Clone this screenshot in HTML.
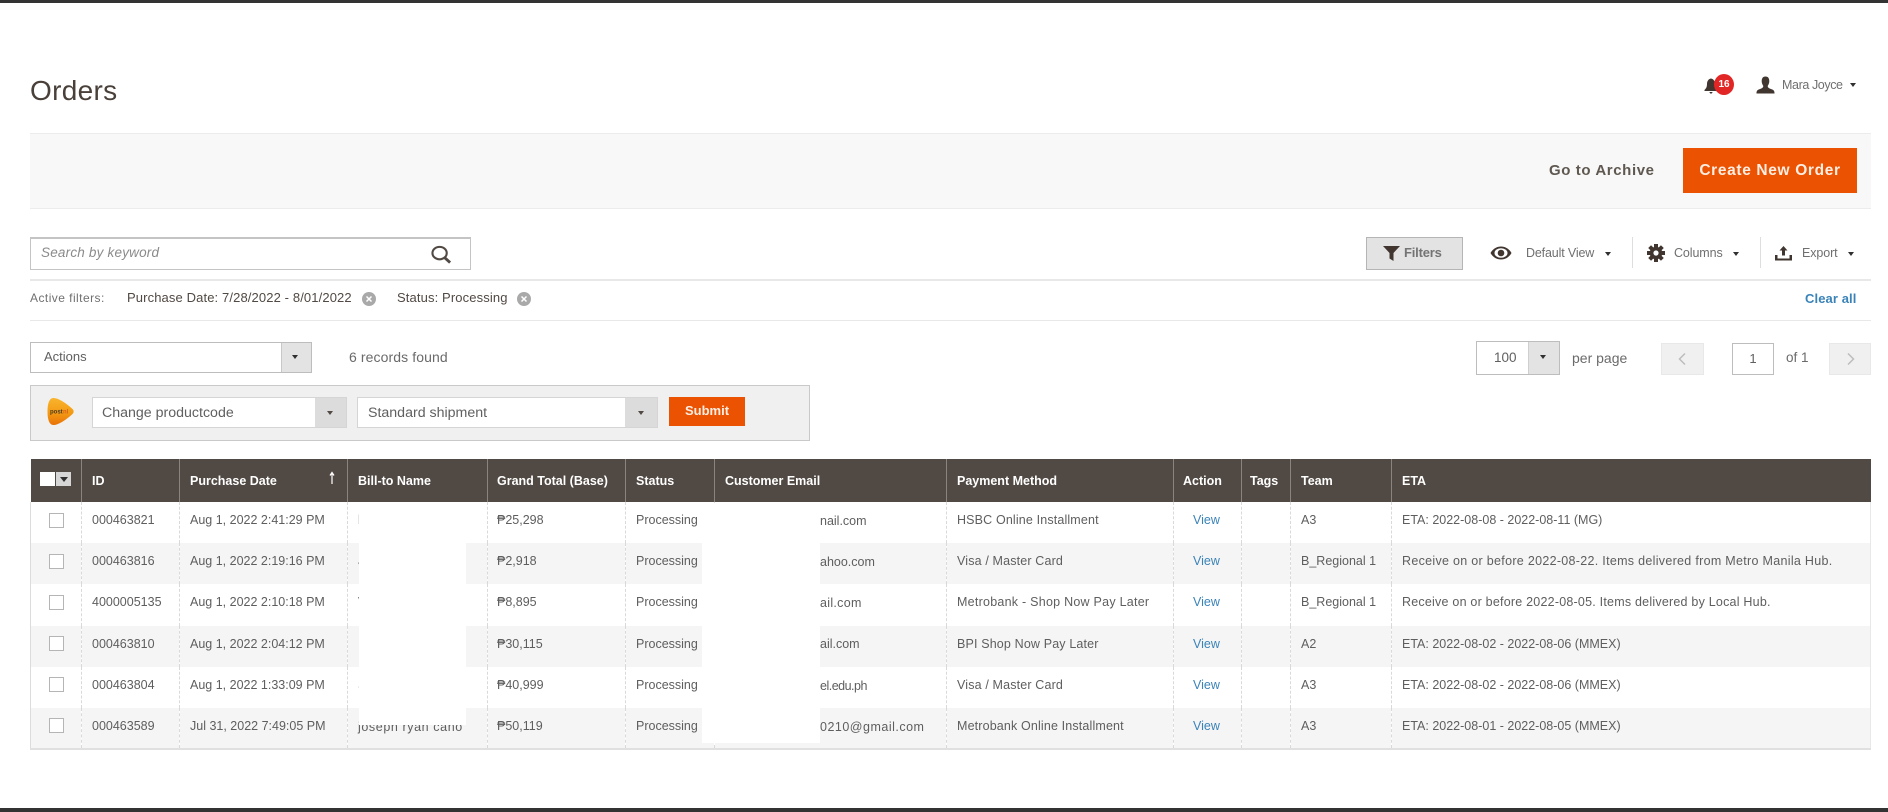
<!DOCTYPE html>
<html lang="en"><head><meta charset="utf-8"><title>Orders</title>
<style>
html,body{margin:0;padding:0;background:#fff}
body{width:1888px;height:812px;overflow:hidden;position:relative;font-family:"Liberation Sans","DejaVu Sans",sans-serif;color:#5e5e5e;font-size:12.5px}
#p{position:absolute;left:0;top:0;width:1888px;height:812px;overflow:hidden;filter:blur(.35px)}
.a{position:absolute;white-space:nowrap;line-height:16px}
.b{position:absolute;box-sizing:border-box}
.c{position:absolute;width:0;height:0;border-left:4px solid transparent;border-right:4px solid transparent;border-top:5px solid #303030}
.c.m{border-left-width:3.5px;border-right-width:3.5px;border-top-width:4.5px}
svg{position:absolute;overflow:visible}
table{position:absolute;left:30px;top:459px;width:1841px;border-collapse:collapse;table-layout:fixed;font-size:12.5px}
th{background:#514943;color:#fff;font-weight:bold;text-align:left;height:43px;padding:0 0 0 10px;border-left:1px solid #8a837e;box-sizing:border-box;white-space:nowrap;overflow:visible}
th:first-child{border-left:0}
th:nth-child(5){padding-left:9px}
th:nth-child(9){padding-left:9px}
th:nth-child(10){padding-left:8px}
td{height:41.2px;padding:0 0 5px 10px;box-sizing:border-box;border-left:1px dashed #d9d9d9;white-space:nowrap;overflow:hidden;color:#5e5e5e}
td:first-child{border-left:1px solid #dcdcdc}
td:last-child{border-right:1px solid #e8e8e8}
td:nth-child(5){padding-left:9px}
td:nth-child(8){letter-spacing:.15px}
tr.s td{background:#f5f5f5}
tbody tr:last-child td{border-bottom:2px solid #e0e0e0}
.k{display:block;width:15px;height:15px;border:1px solid #b5b5b5;background:#fff;margin:0 0 0 8px;box-sizing:border-box}
td.v{color:#3a83b8;padding-left:19px}
</style></head><body><div id="p">

<div class="b" style="left:0;top:0;width:1888px;height:3px;background:#333"></div>
<div class="b" style="left:0;top:808px;width:1888px;height:4px;background:#333"></div>

<div class="a" style="left:30px;top:73px;font-size:28px;line-height:36px;color:#4a403a;letter-spacing:.3px">Orders</div>

<svg style="left:1704px;top:78px" width="14" height="16" viewBox="0 0 14 16"><path d="M7 0.500C4.500 1 3 3 3 6C3 9 2 10.500 0.500 12V13H13.500V12C12 10.500 11 9 11 6C11 3 9.500 1 7 0.500ZM5.500 14H8.500C8.500 15 7.800 15.600 7 15.600C6.200 15.600 5.500 15 5.500 14Z" fill="#41362f"/></svg>
<div class="b" style="left:1714px;top:74px;width:20px;height:21px;border-radius:50%;background:#e22626;color:#fff;font-weight:bold;font-size:10px;line-height:21px;text-align:center">16</div>
<svg style="left:1756px;top:76px" width="19" height="18" viewBox="0 0 20 18"><path d="M10 0C7 0 6 2.200 6 5C6 7.200 7 9 7.700 10C7.500 12 6 12.500 3.500 13.500C1.500 14.300 0.500 15 0.500 18H19.500C19.500 15 18.500 14.300 16.500 13.500C14 12.500 12.500 12 12.300 10C13 9 14 7.200 14 5C14 2.200 13 0 10 0Z" fill="#41362f"/></svg>
<div class="a" style="left:1782px;top:77px;font-size:12.5px;color:#6f6f6f;letter-spacing:-.4px">Mara Joyce</div>
<div class="c m" style="left:1850px;top:83px"></div>

<div class="b" style="left:30px;top:133px;width:1841px;height:76px;background:#f8f8f8;border-top:1px solid #ececec;border-bottom:1px solid #ececec"></div>
<div class="a" style="left:1549px;top:163px;font-size:15px;font-weight:bold;color:#5e5850;letter-spacing:.6px">Go to Archive</div>
<div class="b" style="left:1683px;top:148px;width:174px;height:45px;background:#eb5202;color:#fdeee3;font-weight:bold;font-size:15.5px;letter-spacing:.65px;line-height:46px;text-align:center">Create New Order</div>

<div class="b" style="left:30px;top:237px;width:441px;height:33px;border:1px solid #c4c4c4;border-top-width:2px;background:#fff"></div>
<div class="a" style="left:41px;top:245px;font-style:italic;font-size:13.5px;color:#8a8a8a;letter-spacing:.2px">Search by keyword</div>
<svg style="left:431px;top:245px" width="21" height="19" viewBox="0 0 22 19"><ellipse cx="9" cy="8" rx="7.500" ry="6.500" fill="none" stroke="#514943" stroke-width="2.200"/><path d="M14.500 13L20 18" stroke="#514943" stroke-width="3" fill="none"/></svg>

<div class="b" style="left:1366px;top:237px;width:97px;height:33px;background:#e3e3e3;border:1px solid #b5b5b5"></div>
<svg style="left:1383px;top:246px" width="17" height="15" viewBox="0 0 17 15"><path d="M0 0H17L10.500 7V15L6.500 12.500V7Z" fill="#41362f"/></svg>
<div class="a" style="left:1404px;top:245px;font-size:13px;font-weight:bold;color:#747474;letter-spacing:-.2px">Filters</div>
<svg style="left:1490px;top:246px" width="22" height="14" viewBox="0 0 22 14"><path d="M0.500 7C3 2.500 7 0.500 11 0.500C15 0.500 19 2.500 21.500 7C19 11.500 15 13.500 11 13.500C7 13.500 3 11.500 0.500 7Z" fill="#41362f"/><ellipse cx="11" cy="7" rx="6.500" ry="4.800" fill="#fff"/><circle cx="11" cy="7" r="3.300" fill="#41362f"/></svg>
<div class="a" style="left:1526px;top:245px;color:#6f6f6f;letter-spacing:-.15px">Default View</div>
<div class="c m" style="left:1605px;top:252px"></div>
<div class="b" style="left:1632px;top:237px;width:1px;height:31px;background:#dedede"></div>
<svg style="left:1647px;top:244px" width="18" height="18" viewBox="-9 -9 18 18"><g fill="#41362f"><circle r="6.300"/><rect x="-2" y="-9" width="4" height="18"/><rect x="-2" y="-9" width="4" height="18" transform="rotate(45)"/><rect x="-2" y="-9" width="4" height="18" transform="rotate(90)"/><rect x="-2" y="-9" width="4" height="18" transform="rotate(135)"/></g><circle r="2.600" fill="#fff"/></svg>
<div class="a" style="left:1674px;top:245px;color:#6f6f6f;letter-spacing:-.1px">Columns</div>
<div class="c m" style="left:1733px;top:252px"></div>
<div class="b" style="left:1760px;top:237px;width:1px;height:31px;background:#dedede"></div>
<svg style="left:1775px;top:245px" width="17" height="16" viewBox="0 0 17 16"><path d="M8.500 1L12.500 5.500H10V10.500H7V5.500H4.500Z" fill="#41362f"/><path d="M0 10H2.500V13.500H14.500V10H17V15.500H0Z" fill="#41362f"/></svg>
<div class="a" style="left:1802px;top:245px;color:#6f6f6f;letter-spacing:-.1px">Export</div>
<div class="c m" style="left:1848px;top:252px"></div>

<div class="b" style="left:30px;top:279px;width:1841px;height:2px;background:#e8e8e8"></div>
<div class="a" style="left:30px;top:290px;font-size:12px;color:#707070;letter-spacing:.45px">Active filters:</div>
<div class="a" style="left:127px;top:290px;font-size:13px;color:#514943;letter-spacing:.12px">Purchase Date: 7/28/2022 - 8/01/2022</div>
<svg style="left:362px;top:292px" width="14" height="14" viewBox="0 0 14 14"><circle cx="7" cy="7" r="7" fill="#a9a9a9"/><path d="M4.500 4.500L9.500 9.500M9.500 4.500L4.500 9.500" stroke="#fff" stroke-width="1.500"/></svg>
<div class="a" style="left:397px;top:290px;font-size:13px;color:#514943;letter-spacing:.12px">Status: Processing</div>
<svg style="left:517px;top:292px" width="14" height="14" viewBox="0 0 14 14"><circle cx="7" cy="7" r="7" fill="#a9a9a9"/><path d="M4.500 4.500L9.500 9.500M9.500 4.500L4.500 9.500" stroke="#fff" stroke-width="1.500"/></svg>
<div class="a" style="left:1805px;top:291px;font-size:13px;font-weight:bold;color:#3a83b8;letter-spacing:.1px">Clear all</div>
<div class="b" style="left:30px;top:320px;width:1841px;height:1px;background:#e8e8e8"></div>

<div class="b" style="left:30px;top:342px;width:282px;height:31px;border:1px solid #bdbdbd;background:#fff"></div>
<div class="b" style="left:281px;top:343px;width:30px;height:29px;background:#e3e3e3;border-left:1px solid #c8c8c8"></div>
<div class="c m" style="left:292px;top:355px"></div>
<div class="a" style="left:44px;top:349px;font-size:13px;color:#606060">Actions</div>
<div class="a" style="left:349px;top:349px;font-size:14px;color:#6a6a6a;letter-spacing:.1px">6 records found</div>

<div class="b" style="left:1476px;top:341px;width:84px;height:34px;border:1px solid #bdbdbd;background:#fff"></div>
<div class="b" style="left:1528px;top:342px;width:31px;height:32px;background:#e3e3e3;border-left:1px solid #cfcfcf"></div>
<div class="c m" style="left:1540px;top:355px"></div>
<div class="a" style="left:1494px;top:350px;font-size:13.5px;color:#606060">100</div>
<div class="a" style="left:1572px;top:350px;font-size:14px;color:#6a6a6a">per page</div>
<div class="b" style="left:1661px;top:343px;width:43px;height:32px;background:#f0f0f0;border:1px solid #e8e8e8"></div>
<svg style="left:1677px;top:353px" width="10" height="12" viewBox="0 0 10 12"><path d="M8 0.500L2.500 6L8 11.500" fill="none" stroke="#bdbdbd" stroke-width="1.500"/></svg>
<div class="b" style="left:1732px;top:343px;width:42px;height:32px;border:1px solid #bdbdbd;background:#fff;text-align:center;line-height:30px;font-size:13px;color:#606060">1</div>
<div class="a" style="left:1786px;top:350px;font-size:13.5px;color:#6a6a6a">of 1</div>
<div class="b" style="left:1829px;top:343px;width:42px;height:32px;background:#f0f0f0;border:1px solid #e8e8e8"></div>
<svg style="left:1846px;top:353px" width="10" height="12" viewBox="0 0 10 12"><path d="M2 0.500L7.500 6L2 11.500" fill="none" stroke="#bdbdbd" stroke-width="1.500"/></svg>

<div class="b" style="left:30px;top:385px;width:780px;height:56px;background:#f0f0f0;border:1px solid #c9c9c9"></div>
<svg style="left:46px;top:397px" width="29" height="29" viewBox="0 0 29 29"><defs><linearGradient id="g" x1="0" y1="0" x2="0" y2="1"><stop offset="0" stop-color="#f9b52e"/><stop offset=".55" stop-color="#f39a14"/><stop offset="1" stop-color="#e87208"/></linearGradient></defs><path d="M7 1C11 0.500 19 5 26.500 12C28 13.500 28 15.500 26.500 17C19 24 11 28.500 7 28C3 27.500 1.500 22 1.500 14.500C1.500 7 3 1.500 7 1Z" fill="url(#g)"/><text x="4" y="16.500" font-size="6" font-weight="bold" fill="#4a3a22" font-family="Liberation Sans">post</text><text x="17" y="16.500" font-size="6" font-weight="bold" fill="#d9601a" font-family="Liberation Sans">nl</text></svg>
<div class="b" style="left:92px;top:397px;width:255px;height:31px;background:#fff;border:1px solid #d5d5d5"></div>
<div class="b" style="left:315px;top:398px;width:31px;height:29px;background:#dcdcdc"></div>
<div class="c" style="left:327px;top:411px;border-left-width:3.5px;border-right-width:3.5px;border-top-width:4px;border-top-color:#514943"></div>
<div class="a" style="left:102px;top:405px;font-size:14.2px;color:#606060">Change productcode</div>
<div class="b" style="left:357px;top:397px;width:301px;height:31px;background:#fff;border:1px solid #d5d5d5"></div>
<div class="b" style="left:625px;top:398px;width:32px;height:29px;background:#dcdcdc"></div>
<div class="c" style="left:638px;top:411px;border-left-width:3.5px;border-right-width:3.5px;border-top-width:4px;border-top-color:#514943"></div>
<div class="a" style="left:368px;top:405px;font-size:14.2px;color:#606060">Standard shipment</div>
<div class="b" style="left:669px;top:397px;width:76px;height:29px;background:#eb5202;color:#fdeee3;font-weight:bold;font-size:13px;line-height:28px;text-align:center">Submit</div>

<table>
<colgroup><col style="width:51px"><col style="width:98px"><col style="width:168px"><col style="width:140px"><col style="width:138px"><col style="width:89px"><col style="width:232px"><col style="width:227px"><col style="width:68px"><col style="width:49px"><col style="width:101px"><col></colgroup>
<thead><tr><th></th><th>ID</th><th>Purchase Date</th><th>Bill-to Name</th><th>Grand Total (Base)</th><th>Status</th><th>Customer Email</th><th>Payment Method</th><th>Action</th><th>Tags</th><th>Team</th><th>ETA</th></tr></thead>
<tbody>
<tr><td><span class="k"></span></td><td>000463821</td><td>Aug 1, 2022 2:41:29 PM</td><td>l</td><td>₱25,298</td><td>Processing</td><td></td><td>HSBC Online Installment</td><td class="v">View</td><td></td><td>A3</td><td>ETA: 2022-08-08 - 2022-08-11 (MG)</td></tr>
<tr class="s"><td><span class="k"></span></td><td>000463816</td><td>Aug 1, 2022 2:19:16 PM</td><td>J</td><td>₱2,918</td><td>Processing</td><td></td><td>Visa / Master Card</td><td class="v">View</td><td></td><td>B_Regional 1</td><td style="letter-spacing:.3px">Receive on or before 2022-08-22. Items delivered from Metro Manila Hub.</td></tr>
<tr><td><span class="k"></span></td><td>4000005135</td><td>Aug 1, 2022 2:10:18 PM</td><td>V</td><td>₱8,895</td><td>Processing</td><td></td><td style="letter-spacing:.25px">Metrobank - Shop Now Pay Later</td><td class="v">View</td><td></td><td>B_Regional 1</td><td style="letter-spacing:.22px">Receive on or before 2022-08-05. Items delivered by Local Hub.</td></tr>
<tr class="s"><td><span class="k"></span></td><td>000463810</td><td>Aug 1, 2022 2:04:12 PM</td><td>I</td><td>₱30,115</td><td>Processing</td><td></td><td>BPI Shop Now Pay Later</td><td class="v">View</td><td></td><td>A2</td><td>ETA: 2022-08-02 - 2022-08-06 (MMEX)</td></tr>
<tr><td><span class="k"></span></td><td>000463804</td><td>Aug 1, 2022 1:33:09 PM</td><td>S</td><td>₱40,999</td><td>Processing</td><td></td><td>Visa / Master Card</td><td class="v">View</td><td></td><td>A3</td><td>ETA: 2022-08-02 - 2022-08-06 (MMEX)</td></tr>
<tr class="s"><td><span class="k"></span></td><td>000463589</td><td>Jul 31, 2022 7:49:05 PM</td><td style="letter-spacing:.6px;padding-top:2px">joseph ryan cano</td><td>₱50,119</td><td>Processing</td><td></td><td>Metrobank Online Installment</td><td class="v">View</td><td></td><td>A3</td><td>ETA: 2022-08-01 - 2022-08-05 (MMEX)</td></tr>
</tbody></table>

<div class="b" style="left:40px;top:472px;width:15px;height:14px;background:#fff"></div>
<div class="b" style="left:56px;top:472px;width:15px;height:14px;background:#d6d6d6"></div>
<div class="c" style="left:60px;top:477px;border-top-color:#303030"></div>
<svg style="left:329px;top:472px" width="6" height="13" viewBox="0 0 6 13"><path d="M3 1V12M1 3.500L3 0.500L5 3.500" fill="none" stroke="#fff" stroke-width="1.200"/></svg>

<div class="b" style="left:359px;top:505px;width:107px;height:220px;background:#fff"></div>
<div class="b" style="left:702px;top:503px;width:118px;height:40px;background:#fff"></div>
<div class="b" style="left:702px;top:543px;width:118px;height:200px;background:#fff"></div>

<div class="a" style="left:820px;top:513px">nail.com</div>
<div class="a" style="left:820px;top:554px">ahoo.com</div>
<div class="a" style="left:820px;top:595px;letter-spacing:.3px">ail.com</div>
<div class="a" style="left:820px;top:636px">ail.com</div>
<div class="a" style="left:820px;top:678px;letter-spacing:-.5px">el.edu.ph</div>
<div class="a" style="left:820px;top:719px;letter-spacing:.5px">0210@gmail.com</div>

</div></body></html>
